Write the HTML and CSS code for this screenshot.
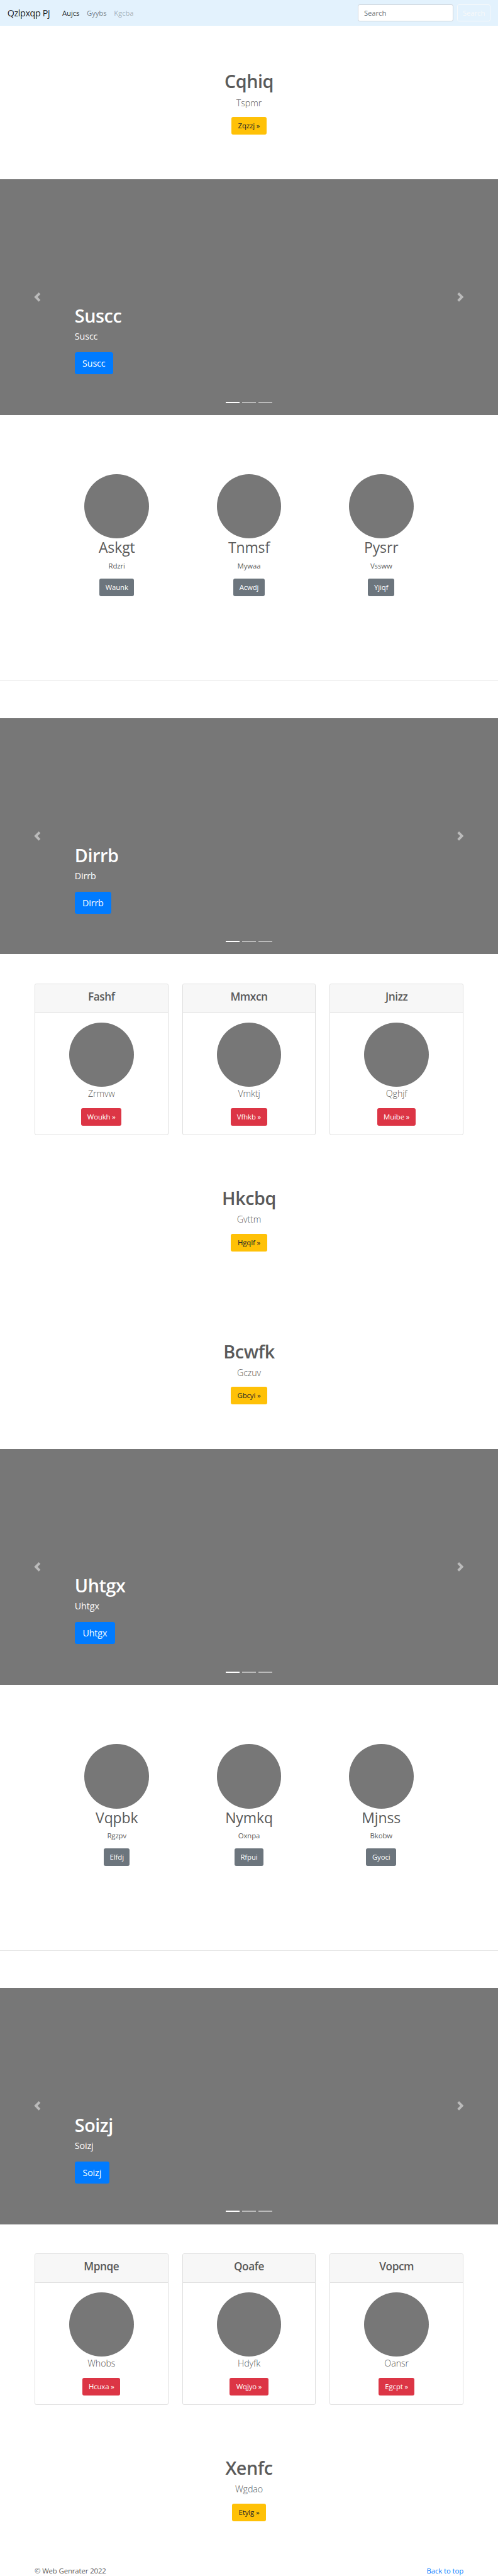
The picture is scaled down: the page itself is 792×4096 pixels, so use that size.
FILE: index.html
```html
<!DOCTYPE html>
<html lang="en">
<head>
<meta charset="utf-8">
<title>Qzlpxqp Pj</title>
<link rel="stylesheet" href="styles.css">
</head>
<body>
<nav class="navbar">
  <a class="brand">Qzlpxqp Pj</a>
  <a class="nav-link active">Aujcs</a>
  <a class="nav-link">Gyybs</a>
  <a class="nav-link disabled">Kgcba</a>
  <form class="search">
    <input class="search-input" type="text" placeholder="Search">
    <button class="search-btn" type="button">Search</button>
  </form>
</nav>

<section class="hero">
  <h1 class="title">Cqhiq</h1>
  <p class="lead">Tspmr</p>
  <a class="btn warning w76">Zqzzj »</a>
</section>

<section class="carousel">
  <svg class="prev" viewBox="0 0 8 8"><path d="M5.25 0l-4 4 4 4 1.5-1.5L4.25 4l2.5-2.5L5.25 0z"/></svg>
  <div class="caption">
    <h1 class="title">Suscc</h1>
    <p class="caption-text">Suscc</p>
    <a class="btn-lg w83">Suscc</a>
  </div>
  <svg class="next" viewBox="0 0 8 8"><path d="M2.75 0l-1.5 1.5L3.75 4l-2.5 2.5L2.75 8l4-4-4-4z"/></svg>
  <div class="indicators"><i class="dash on"></i><i class="dash"></i><i class="dash"></i></div>
</section>

<section class="marketing">
  <div class="feature"><div class="circle"></div><h2 class="feature-title">Askgt</h2><p class="text">Rdzri</p><a class="btn secondary w75">Waunk</a></div>
  <div class="feature"><div class="circle"></div><h2 class="feature-title">Tnmsf</h2><p class="text">Mywaa</p><a class="btn secondary w68">Acwdj</a></div>
  <div class="feature"><div class="circle"></div><h2 class="feature-title">Pysrr</h2><p class="text">Vssww</p><a class="btn secondary w57">Yjiqf</a></div>
</section>
<hr class="divider">

<section class="carousel">
  <svg class="prev" viewBox="0 0 8 8"><path d="M5.25 0l-4 4 4 4 1.5-1.5L4.25 4l2.5-2.5L5.25 0z"/></svg>
  <div class="caption">
    <h1 class="title">Dirrb</h1>
    <p class="caption-text">Dirrb</p>
    <a class="btn-lg w79">Dirrb</a>
  </div>
  <svg class="next" viewBox="0 0 8 8"><path d="M2.75 0l-1.5 1.5L3.75 4l-2.5 2.5L2.75 8l4-4-4-4z"/></svg>
  <div class="indicators"><i class="dash on"></i><i class="dash"></i><i class="dash"></i></div>
</section>

<section class="cards">
  <div class="card"><div class="card-header"><h4 class="card-title">Fashf</h4></div><div class="card-body"><div class="circle"></div><p class="lead">Zrmvw</p><a class="btn danger w88">Woukh »</a></div></div>
  <div class="card"><div class="card-header"><h4 class="card-title">Mmxcn</h4></div><div class="card-body"><div class="circle"></div><p class="lead">Vmktj</p><a class="btn danger w80">Vfhkb »</a></div></div>
  <div class="card"><div class="card-header"><h4 class="card-title">Jnizz</h4></div><div class="card-body"><div class="circle"></div><p class="lead">Qghjf</p><a class="btn danger w84">Muibe »</a></div></div>
</section>

<section class="hero">
  <h1 class="title">Hkcbq</h1>
  <p class="lead">Gvttm</p>
  <a class="btn warning w78">Hgqlf »</a>
</section>

<section class="hero">
  <h1 class="title">Bcwfk</h1>
  <p class="lead">Gczuv</p>
  <a class="btn warning w78">Gbcyi »</a>
</section>

<section class="carousel">
  <svg class="prev" viewBox="0 0 8 8"><path d="M5.25 0l-4 4 4 4 1.5-1.5L4.25 4l2.5-2.5L5.25 0z"/></svg>
  <div class="caption">
    <h1 class="title">Uhtgx</h1>
    <p class="caption-text">Uhtgx</p>
    <a class="btn-lg w88">Uhtgx</a>
  </div>
  <svg class="next" viewBox="0 0 8 8"><path d="M2.75 0l-1.5 1.5L3.75 4l-2.5 2.5L2.75 8l4-4-4-4z"/></svg>
  <div class="indicators"><i class="dash on"></i><i class="dash"></i><i class="dash"></i></div>
</section>

<section class="marketing">
  <div class="feature"><div class="circle"></div><h2 class="feature-title">Vqpbk</h2><p class="text">Rgzpv</p><a class="btn secondary w56">Elfdj</a></div>
  <div class="feature"><div class="circle"></div><h2 class="feature-title">Nymkq</h2><p class="text">Oxnpa</p><a class="btn secondary w62">Rfpui</a></div>
  <div class="feature"><div class="circle"></div><h2 class="feature-title">Mjnss</h2><p class="text">Bkobw</p><a class="btn secondary w65">Gyoci</a></div>
</section>
<hr class="divider">

<section class="carousel">
  <svg class="prev" viewBox="0 0 8 8"><path d="M5.25 0l-4 4 4 4 1.5-1.5L4.25 4l2.5-2.5L5.25 0z"/></svg>
  <div class="caption">
    <h1 class="title">Soizj</h1>
    <p class="caption-text">Soizj</p>
    <a class="btn-lg w75">Soizj</a>
  </div>
  <svg class="next" viewBox="0 0 8 8"><path d="M2.75 0l-1.5 1.5L3.75 4l-2.5 2.5L2.75 8l4-4-4-4z"/></svg>
  <div class="indicators"><i class="dash on"></i><i class="dash"></i><i class="dash"></i></div>
</section>

<section class="cards">
  <div class="card"><div class="card-header"><h4 class="card-title">Mpnqe</h4></div><div class="card-body"><div class="circle"></div><p class="lead">Whobs</p><a class="btn danger w82">Hcuxa »</a></div></div>
  <div class="card"><div class="card-header"><h4 class="card-title">Qoafe</h4></div><div class="card-body"><div class="circle"></div><p class="lead">Hdyfk</p><a class="btn danger w84">Wqjyo »</a></div></div>
  <div class="card"><div class="card-header"><h4 class="card-title">Vopcm</h4></div><div class="card-body"><div class="circle"></div><p class="lead">Oansr</p><a class="btn danger w78">Egcpt »</a></div></div>
</section>

<section class="hero">
  <h1 class="title">Xenfc</h1>
  <p class="lead">Wgdao</p>
  <a class="btn warning w74">Etylg »</a>
</section>

<footer class="footer">
  <span>© Web Genrater 2022</span>
  <a class="top-link">Back to top</a>
</footer>
</body>
</html>
```
FILE: styles.css
```css
html {
  font-size: 11.7333px;
  overflow: hidden;
}
*, *::before, *::after { box-sizing: border-box; }
body {
  margin: 0;
  height: 4096px;
  overflow: hidden;
  background: #fff;
  color: #5a5a5a;
  font-family: "Open Sans", "Noto Sans", sans-serif;
  font-size: 0.97rem;
  line-height: 1.5rem;
  letter-spacing: -0.01em;
}
h1, h2, h4, p { margin: 0; }

/* Navigation */
.navbar {
  display: flex;
  align-items: center;
  height: 3.5rem;
  padding: 0 1rem;
  background: #e3f2fd;
}
.brand {
  width: 5.94rem;
  margin-right: 1rem;
  color: rgba(0, 0, 0, 0.9);
  font-size: 1.22rem;
  letter-spacing: -0.025em;
  white-space: nowrap;
}
.nav-link {
  padding: 0 0.5rem;
  color: rgba(0, 0, 0, 0.5);
}
.nav-link.active { color: rgba(0, 0, 0, 0.9); }
.nav-link.disabled { color: rgba(0, 0, 0, 0.3); }
.search {
  display: flex;
  gap: 0.5rem;
  margin-left: auto;
}
.search-input {
  width: 12.95rem;
  height: 2.375rem;
  padding: 0 0.75rem;
  border: 1px solid #ced4da;
  border-radius: 0.25rem;
  background: #fff;
  font: inherit;
  letter-spacing: inherit;
}
.search-input::placeholder { color: #6c757d; opacity: 1; }
.search-btn {
  width: 4.55rem;
  height: 2.375rem;
  padding: 0;
  border: 1px solid #f8f9fa;
  border-radius: 0.25rem;
  background: transparent;
  color: #f8f9fa;
  font: inherit;
  letter-spacing: inherit;
}

/* Type */
.title {
  margin-bottom: 0.375rem;
  font-size: 2.45rem;
  font-weight: 600;
  line-height: 3.125rem;
  letter-spacing: -0.015em;
}
.lead {
  margin-bottom: 1rem;
  font-size: 1.22rem;
  font-weight: 300;
  line-height: 1.875rem;
}
.text { margin-bottom: 1rem; }

/* Buttons */
.btn {
  display: block;
  height: 2.375rem;
  border-radius: 0.25rem;
  line-height: 2.375rem;
  text-align: center;
  white-space: nowrap;
}
.btn-lg {
  display: block;
  height: 3rem;
  border-radius: 0.3rem;
  background: #007bff;
  color: #fff;
  font-size: 1.22rem;
  line-height: 3rem;
  text-align: center;
}
.warning { background: #ffc107; color: #212529; }
.secondary { background: #6c757d; color: #fff; }
.danger { background: #dc3545; color: #fff; }
.w56 { width: 3.5rem; }
.w57 { width: 3.58rem; }
.w62 { width: 3.88rem; }
.w65 { width: 4.09rem; }
.w68 { width: 4.22rem; }
.w74 { width: 4.65rem; }
.w75 { width: 4.69rem; }
.w76 { width: 4.75rem; }
.w78 { width: 4.9rem; }
.w79 { width: 4.95rem; }
.w80 { width: 5rem; }
.w82 { width: 5.12rem; }
.w83 { width: 5.2rem; }
.w84 { width: 5.25rem; }
.w88 { width: 5.47rem; }

.hero {
  display: flex;
  flex-direction: column;
  align-items: center;
  height: 20.75rem;
  padding-top: 6rem;
}

/* Carousel */
.carousel {
  position: relative;
  display: grid;
  grid-template-columns: 15% 1fr 15%;
  align-items: center;
  justify-items: center;
  height: 32rem;
  background: #777;
  color: #fff;
}
.prev, .next {
  width: 1.25rem;
  height: 1.25rem;
  fill: #fff;
  opacity: 0.5;
}
.caption {
  align-self: end;
  justify-self: start;
  padding-bottom: 5.5rem;
}
.caption-text {
  margin-bottom: 1.25rem;
  font-size: 1.22rem;
  line-height: 1.75rem;
}
.indicators {
  position: absolute;
  right: 0;
  bottom: 1.625rem;
  left: 0;
  display: flex;
  justify-content: center;
  gap: 0.375rem;
}
.dash {
  width: 1.875rem;
  height: 0.1875rem;
  background: #fff;
  opacity: 0.5;
}
.dash.on { opacity: 1; }

/* Feature columns */
.marketing {
  display: flex;
  justify-content: center;
  height: 36rem;
  padding-top: 8rem;
}
.feature {
  display: flex;
  flex-direction: column;
  align-items: center;
  width: 17.92rem;
}
.circle {
  width: 8.75rem;
  height: 8.75rem;
  border-radius: 50%;
  background: #777;
}
.feature-title {
  margin-bottom: 0.35rem;
  font-size: 1.96rem;
  font-weight: 400;
  line-height: 2.55rem;
}
.divider {
  height: 0.0625rem;
  margin: 0 0 5rem;
  border: 0;
  border-top: 1px solid #e6e6e6;
}

/* Cards */
.cards {
  display: flex;
  gap: 1.875rem;
  height: 25.5rem;
  padding: 4rem 4.6875rem 1rem;
}
.card {
  flex: 1;
  border: 1px solid #dfdfdf;
  border-radius: 0.25rem;
  overflow: hidden;
}
.card-header {
  height: 3.875rem;
  padding-top: 0.75rem;
  border-bottom: 1px solid #dfdfdf;
  background: #f7f7f7;
  text-align: center;
}
.card-title {
  font-size: 1.47rem;
  font-weight: 600;
  line-height: 1.8rem;
  letter-spacing: -0.025em;
}
.card-body {
  display: flex;
  flex-direction: column;
  align-items: center;
  padding-top: 1.25rem;
}

.footer {
  display: flex;
  justify-content: space-between;
  padding: 0 4.6875rem;
}
.top-link { color: #007bff; }
```
